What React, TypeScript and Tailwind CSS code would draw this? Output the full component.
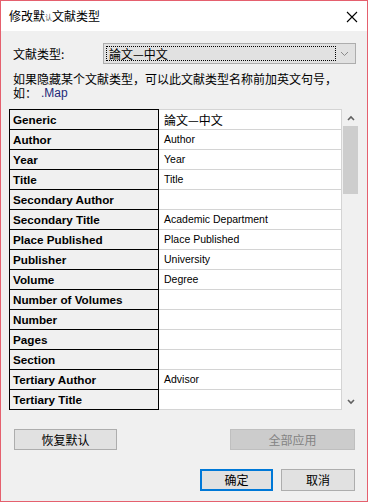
import React from "react";

const rows: [string, string][] = [
  ["Generic", "論文—中文"],
  ["Author", "Author"],
  ["Year", "Year"],
  ["Title", "Title"],
  ["Secondary Author", ""],
  ["Secondary Title", "Academic Department"],
  ["Place Published", "Place Published"],
  ["Publisher", "University"],
  ["Volume", "Degree"],
  ["Number of Volumes", ""],
  ["Number", ""],
  ["Pages", ""],
  ["Section", ""],
  ["Tertiary Author", "Advisor"],
  ["Tertiary Title", ""],
];

const cjk = "font-['Noto_Sans_CJK_SC','Noto_Sans',sans-serif]";
const lat = "font-['Liberation_Sans',Arial,'Noto_Sans_CJK_SC',sans-serif]";

export default function App() {
  return (
    <div className={`w-[368px] h-[502px] border border-[#e5606e] bg-[#f0f0f0] flex flex-col text-black ${cjk}`}>
      {/* Title bar */}
      <div className="h-[30px] shrink-0 bg-white flex items-center justify-between pl-[8px] pr-[9px]">
        <div className="text-[12px] leading-none flex items-end">
          <span>修改默</span>
          <span className="text-[7px] text-[#555] leading-none mb-[1px]">认</span>
          <span>文献类型</span>
        </div>
        <svg width="12" height="12" viewBox="0 0 12 12" className="mt-[1px]">
          <path d="M1 1 L11 11 M11 1 L1 11" stroke="#000" strokeWidth="1.1" />
        </svg>
      </div>

      {/* Type row */}
      <div className="flex items-center mt-[12px] pl-[12px] h-[21px] shrink-0">
        <div className="w-[90px] text-[12px] leading-none">文献类型:</div>
        <div className="w-[253px] h-[21px] bg-[#e1e1e1] border border-[#adadad] flex items-center p-[2px]">
          <div className="w-[230px] h-[15px] border border-dotted border-black flex items-center pl-[2px] text-[12px] leading-none">
            論文—中文
          </div>
          <div className="flex-1 flex justify-center items-center">
            <svg width="9" height="6" viewBox="0 0 9 6">
              <path d="M1 1 L4.5 4.5 L8 1" stroke="#8a8a8a" strokeWidth="1" fill="none" />
            </svg>
          </div>
        </div>
      </div>

      {/* hint text */}
      <div className="mt-[8px] pl-[12px] text-[12px] h-[28px] shrink-0 flex flex-col">
        <div className="h-[14px] leading-[14px] whitespace-nowrap">如果隐藏某个文献类型，可以此文献类型名称前加英文句号，</div>
        <div className="h-[14px] leading-[14px] flex items-center whitespace-nowrap">
          <span className="leading-[14px]">如：</span>
          <span className={`${lat} text-[12px] leading-[14px] text-[#1e2a78] ml-[4px]`}>.Map</span>
        </div>
      </div>

      {/* table */}
      <div className="mt-[9px] pl-[8px] flex shrink-0">
        <div className="flex flex-col">
          {rows.map(([k, v], i) => {
            const last = i === rows.length - 1;
            return (
              <div key={k} className={`flex ${last ? "h-[21px]" : "h-[20px]"}`}>
                <div
                  className={`w-[150px] border-x border-t border-black bg-[#f0f0f0] pl-[3px] flex items-center ${lat} font-bold text-[11.7px] leading-none ${
                    last ? "h-[21px] border-b" : "h-[20px]"
                  }`}
                >
                  {k}
                </div>
                <div
                  className={`w-[183px] border-t border-r border-[#d4d4d4] bg-white pl-[5px] flex items-center leading-none ${
                    i === 0 ? `${cjk} text-[12px]` : `${lat} text-[10.5px]`
                  } ${last ? "h-[21px] border-b" : "h-[20px]"}`}
                >
                  {v}
                </div>
              </div>
            );
          })}
        </div>
        {/* scrollbar */}
        <div className="ml-[1px] w-[15px] h-[301px] flex flex-col">
          <div className="h-[17px] flex items-center justify-center">
            <svg width="8" height="6" viewBox="0 0 8 6">
              <path d="M1 5 L4 2 L7 5" stroke="#606060" strokeWidth="1.6" fill="none" />
            </svg>
          </div>
          <div className="h-[68px] bg-[#cdcdcd]" />
          <div className="flex-1" />
          <div className="h-[17px] flex items-center justify-center">
            <svg width="8" height="6" viewBox="0 0 8 6">
              <path d="M1 1 L4 4 L7 1" stroke="#606060" strokeWidth="1.6" fill="none" />
            </svg>
          </div>
        </div>
      </div>

      {/* button row 1 */}
      <div className="mt-[19px] flex justify-between pl-[13px] pr-[12px] shrink-0">
        <div className="w-[103px] h-[21px] bg-[#e1e1e1] border border-[#adadad] flex items-center justify-center text-[12px] leading-none">
          恢复默认
        </div>
        <div className="w-[125px] h-[21px] bg-[#cccccc] border border-[#bfbfbf] flex items-center justify-center text-[12px] leading-none text-[#838383]">
          全部应用
        </div>
      </div>

      {/* button row 2 */}
      <div className="mt-[19px] flex justify-end gap-[8px] pr-[12px] shrink-0">
        <div className="w-[73px] h-[22px] bg-[#e1e1e1] border-2 border-[#0078d7] flex items-center justify-center text-[12px] leading-none">
          确定
        </div>
        <div className="w-[74px] h-[22px] bg-[#e1e1e1] border border-[#adadad] flex items-center justify-center text-[12px] leading-none">
          取消
        </div>
      </div>
    </div>
  );
}
